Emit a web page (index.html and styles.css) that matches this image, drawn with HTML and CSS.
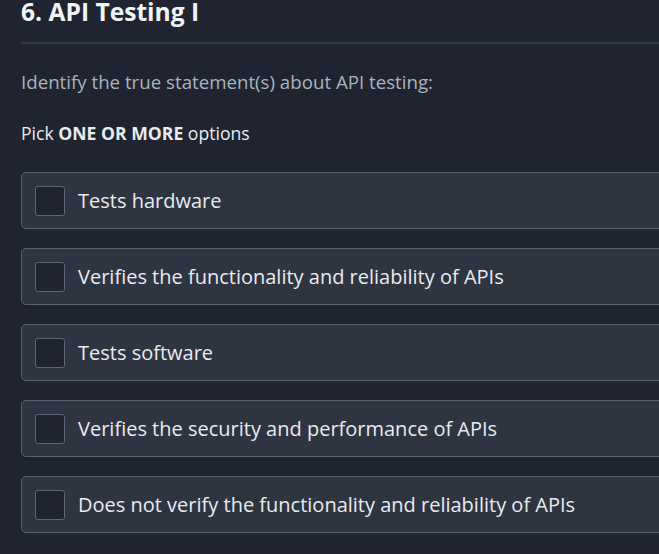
FILE: index.html
```html
<!DOCTYPE html>
<html lang="en">
<head>
<meta charset="utf-8">
<title>API Testing I</title>
<link rel="stylesheet" href="styles.css">
</head>
<body>
<main class="question">
  <h1 class="title">6. API Testing I</h1>
  <hr class="divider">
  <p class="prompt">Identify the true statement(s) about API testing:</p>
  <p class="hint">Pick <strong>ONE OR MORE</strong> options</p>
  <ul class="options">
    <li class="option"><span class="box"></span><span class="label">Tests hardware</span></li>
    <li class="option"><span class="box"></span><span class="label">Verifies the functionality and reliability of APIs</span></li>
    <li class="option"><span class="box"></span><span class="label">Tests software</span></li>
    <li class="option"><span class="box"></span><span class="label">Verifies the security and performance of APIs</span></li>
    <li class="option"><span class="box"></span><span class="label">Does not verify the functionality and reliability of APIs</span></li>
  </ul>
</main>
</body>
</html>
```
FILE: styles.css
```css
html, body {
  margin: 0;
  padding: 0;
  background: #1f2430;
  overflow: hidden;
  height: 100%;
}
body {
  font-family: "Open Sans", "Noto Sans", sans-serif;
  color: #e8ecf1;
}
.question {
  width: 720px;
  padding-left: 21px;
}
.title {
  margin: 0;
  font-size: 24.6px;
  line-height: 24px;
  font-weight: 700;
  color: #f1f4f8;
}
.divider {
  margin: 18px 0 0 0;
  border: 0;
  height: 2px;
  background: #333a47;
}
.prompt {
  margin: 24px 0 0 0;
  font-size: 18.7px;
  line-height: 27px;
  color: #a9b3bf;
}
.hint {
  margin: 26px 0 0 0;
  font-size: 17.6px;
  line-height: 24px;
  color: #e8ecf1;
}
.hint strong {
  font-weight: 700;
}
.options {
  list-style: none;
  margin: 27px 0 0 0;
  padding: 0;
  display: flex;
  flex-direction: column;
  gap: 19px;
}
.option {
  box-sizing: border-box;
  height: 57px;
  display: flex;
  align-items: center;
  gap: 13px;
  padding-left: 13px;
  background: #2f3441;
  border: 1px solid #576071;
  border-radius: 5px;
}
.box {
  box-sizing: border-box;
  width: 30px;
  height: 30px;
  flex: none;
  background: #1f2430;
  border: 1px solid #5c6575;
  border-radius: 3px;
}
.label {
  font-size: 20px;
  line-height: 28px;
  color: #e8ebf0;
}
```
